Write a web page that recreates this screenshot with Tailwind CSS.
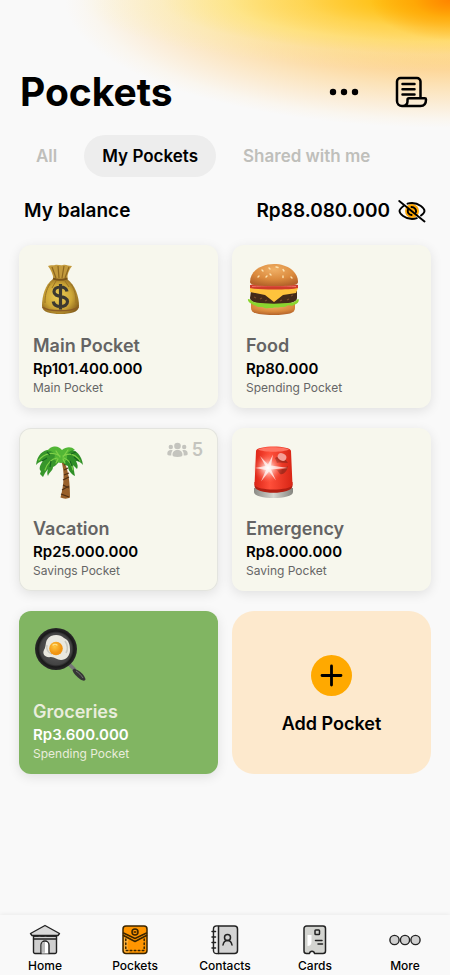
<!DOCTYPE html>
<html lang="en">
<head>
  <meta charset="UTF-8" />
  <meta name="viewport" content="width=device-width, initial-scale=1.0"/>
  <title>Pockets</title>
  <script src="https://cdn.jsdelivr.net/npm/@tailwindcss/browser@4"></script>
</head>
<body class="bg-[#f9f9f9] text-black font-['Inter',sans-serif]">
<div class="min-h-screen flex flex-col bg-no-repeat bg-[radial-gradient(ellipse_80px_40px_at_100%_0,#ff8500_0%,#ff9d0099_45%,#ffb40000_100%),radial-gradient(ellipse_370px_70px_at_100%_0,#ffae00_0%,#ffc312e6_20%,#ffdb45b3_40%,#fff27880_60%,#fcf8b04d_78%,#fbf8d000_100%),radial-gradient(ellipse_385px_128px_at_100%_0,#ffae48_0%,#ffc267_30%,#fdd38f_50%,#fce3b9_68%,#fbeeda_83%,#faf6ef_93%,#f9f9f9_100%)]">

  <header class="flex items-center pt-[68px] pl-5 pr-[22px]">
    <h1 class="flex-1 text-[39px] leading-12 font-bold">Pockets</h1>
    <button aria-label="Options" class="mr-9">
      <svg class="w-[30px] h-2" viewBox="0 0 30 8"><circle cx="4" cy="4" r="3.2"/><circle cx="15" cy="4" r="3.2"/><circle cx="26" cy="4" r="3.2"/></svg>
    </button>
    <button aria-label="History">
      <svg class="w-[33px] h-8" viewBox="0 0 33 32" fill="none" stroke="#000" stroke-width="2.500" stroke-linecap="round" stroke-linejoin="round">
        <path d="M25.500 22V5.500a3.500 3.500 0 0 0-3.500-3.500H5.500A3.500 3.500 0 0 0 2 5.500V25a5 5 0 0 0 5 5H25.500c3 0 5.500-2 5.500-6.500 0-.8-.4-1.200-1.200-1.200H14c-1 0-1.500.5-1.500 1.500v1.700A4.500 4.500 0 0 1 8 30"/>
        <path d="M7.500 8H19.500M7.500 13.200H19.500M7.500 18.400H19.500"/>
      </svg>
    </button>
  </header>

  <nav class="flex gap-[9px] mt-[19px] pl-[18px] text-[17px] leading-[42px] font-semibold text-[#bfbfbb]">
    <button class="px-[18px]">All</button>
    <button class="px-[18px] rounded-full bg-[#ededed] text-black">My Pockets</button>
    <button class="px-[18px]">Shared with me</button>
  </nav>

  <section class="flex items-center mt-5 pl-6 pr-6 text-[19px] leading-7 font-semibold">
    <h2 class="flex-1">My balance</h2>
    <p>Rp88.080.000</p>
    <button aria-label="Hide balance" class="ml-2">
      <svg class="w-7 h-6" viewBox="0 0 28 24" fill="none" stroke="#000" stroke-width="1.900" stroke-linecap="round">
        <circle cx="14" cy="12" r="7" fill="#ffa600" stroke="none"/>
        <path d="M5.500 7C3 9 1.500 11 1.500 12c0 2.500 5.500 8 12.500 8 1.800 0 3.400-.3 4.800-.8M9.500 4.700C10.900 4.200 12.400 4 14 4c7 0 12.500 5.500 12.500 8 0 1.200-1.300 3-3.500 4.600"/>
        <path d="M10 10.500c-.8 2.700.7 5.200 3.600 5.500M13.500 8c2.900 0 5 2.500 4.500 5.200M1.200 2 26.500 22.500"/>
      </svg>
    </button>
  </section>

  <main class="grid grid-cols-2 gap-x-[14px] gap-y-5 mt-5 px-[19px] pb-6">

    <a href="#" class="rounded-xl bg-[#f7f7ed] shadow-[0_3px_12px_rgba(0,0,0,0.1)] px-[14px] pt-4 pb-3">
      <svg class="size-14" viewBox="0 0 56 56">
        <defs>
          <radialGradient id="sack" cx="45%" cy="50%" r="60%"><stop offset="0" stop-color="#edcf57"/><stop offset=".6" stop-color="#cda637"/><stop offset="1" stop-color="#87601d"/></radialGradient>
        </defs>
        <path d="M20 18C12 24 9 35 9 45c0 6 8 8 18.500 8S46 51 46 45c0-10-4-21-12-27z" fill="url(#sack)"/>
        <path d="M15 5c3-1.500 5 0 7-1 3-1 5 1 8 0s5 1 9 1c-3 4-5 8-4.500 13-4 1.500-10 1.500-14 0C20 13 18 9 15 5z" fill="#c39a3c"/>
        <path d="M19 6l4 11M25 5l1 12M31 5l-2 12M36 6l-4 11" stroke="#8d671f" stroke-width="1.200" fill="none"/>
        <path d="M20 17.500c4 1.500 10 1.500 14.500 0" stroke="#7b5518" stroke-width="2" fill="none"/>
        <path d="M17 23c-4 6-5 12-5 19M38 23c4 6 5 12 5 19M23 20l-4 7M32 20l4 6" stroke="#9b7425" stroke-width="1" fill="none"/>
        <path d="M9.500 46c6 5 29 5 36 0" stroke="#8b5c26" stroke-width="1.500" fill="none"/>
        <path d="M34 30.500c-.6-3-3-4.500-6.500-4.500-4 0-6.500 2-6.500 4.800 0 6.400 13.500 3 13.500 9.700 0 3-2.700 5-7 5-4 0-6.700-1.800-7.300-5M27.500 23v25.500" stroke="#3c3930" stroke-width="3.200" fill="none"/>
      </svg>
      <h3 class="mt-[17px] text-lg leading-6 font-semibold text-[#646464]">Main Pocket</h3>
      <p class="text-[15px] leading-[21px] font-semibold">Rp101.400.000</p>
      <p class="text-xs leading-[17px] text-[#666]">Main Pocket</p>
    </a>

    <a href="#" class="rounded-xl bg-[#f7f7ed] shadow-[0_3px_12px_rgba(0,0,0,0.1)] px-[14px] pt-4 pb-3">
      <svg class="size-14" viewBox="0 0 56 56">
        <defs>
          <radialGradient id="bun" cx="50%" cy="25%" r="75%"><stop offset="0" stop-color="#f0b066"/><stop offset=".6" stop-color="#db8a3d"/><stop offset="1" stop-color="#b4632a"/></radialGradient>
        </defs>
        <path d="M5 42h44v5c0 5-6 7-22 7S5 52 5 47z" fill="url(#bun)"/>
        <path d="M5 30h46v7c0 5-9 6-23 6S4 42 4 37z" fill="#432a19"/>
        <path d="M8 36l2 1m4 1l2-1m3 3l2-1m13 1l2-1m5 0l2-1m2-3l2-1" stroke="#7a4c2b" stroke-width="1.200"/>
        <path d="M2 38c3 0 4 3 8 3.500 10 1.500 26 1.500 36 0 4-.5 4-3 6.500-3.500 1 2-.5 5-3.500 5.500-2 .5-2 2-5 1s-4 2-7 1.500-4 1-6.500.5-4 1-6.500.5-4 1-6.500-.5-4 .5-6.500-1S1 42 2 38z" fill="#8bd52f"/>
        <path d="M4 27h48l-2 5-13 2-9 7-9-7-15-3z" fill="#ffc33c"/>
        <path d="M4 24c6-2 42-2 48 0v3c-7 2-41 2-48 0z" fill="#cf3c2c"/>
        <path d="M6 25.500c10-1 34-1 44 0" stroke="#f0776a" stroke-width="1" fill="none"/>
        <path d="M28 3C14 3 4 11 4 21c0 3 5 4 24 4s24-1 24-4C52 11 42 3 28 3z" fill="url(#bun)"/>
        <path d="M16 9l1 1m6-3l1 1m6-2l2 .5m5 2l1 1.500m-14 3l1 1m12 1v1.500M13 15l-1 1m33 0l1 1m-25-2l-1 1" stroke="#fde3b0" stroke-width="1.400" stroke-linecap="round"/>
      </svg>
      <h3 class="mt-[17px] text-lg leading-6 font-semibold text-[#646464]">Food</h3>
      <p class="text-[15px] leading-[21px] font-semibold">Rp80.000</p>
      <p class="text-xs leading-[17px] text-[#666]">Spending Pocket</p>
    </a>

    <a href="#" class="relative rounded-xl bg-[#f7f7ed] shadow-[0_3px_12px_rgba(0,0,0,0.1)] ring-1 ring-inset ring-[#e3e4df] px-[14px] pt-4 pb-3">
      <span class="absolute top-[10px] right-[15px] flex items-center gap-1 text-lg leading-6 font-semibold text-[#c4c4be]">
        <svg class="w-[21px] h-4" viewBox="0 0 21 16" fill="currentColor">
          <circle cx="10.500" cy="4" r="3.300"/><circle cx="3.800" cy="5" r="2.200"/><circle cx="17.200" cy="5" r="2.200"/>
          <path d="M5.500 13c0-3.500 2-5 5-5s5 1.500 5 5c0 1-1.500 2-5 2s-5-1-5-2zM.3 12c0-3 1.300-4 3.500-4 .8 0 1.400.1 1.900.4C4.500 9.700 4.200 11 4.300 13.500 1.500 13.500.3 13 .3 12zM20.700 12c0-3-1.300-4-3.500-4-.8 0-1.400.1-1.900.4 1.200 1.300 1.500 2.600 1.400 5.100 2.800 0 4-.5 4-1.500z"/>
        </svg>
        5
      </span>
      <svg class="size-14" viewBox="0 0 56 56">
        <path d="M28 16c4 12 3 25-.5 37.500 3 1.500 7 1.500 9.500 0C37 40 36 26 30 15z" fill="#986029"/>
        <path d="M31 21l2.500-1M31 26l4-2M31 31l5-2M30 36l6-3M30 41l6 3M29 46l7-4M28 50l8 3" stroke="#4f2f13" stroke-width="1.200"/>
        <path d="M28 14C22 1 5 3 3 21c3-3 5-4 7-4-4 5-4 9-2 10l-1 3 3 3 2-4 3-4c-1 3-1 5 0 7 1-4 5-5 5-9 3-1 6-5 8-9z" fill="#37962b"/>
        <path d="M28 14C33 0 48 5 50 21c-3-3-4-4-7-4 2 4 2 6 1 8l-4-4c1 4 1 7 2 11-4-2-7-6-7-10-4-1-6-4-7-8z" fill="#2f8f27"/>
        <path d="M17 4c6-3 9-1 12 2 4-3 9-4 13 0-4 0-7 2-8 5 1 5-2 8-6 8s-8-3-6-8C20 8 18 6 14 7z" fill="#52b635"/>
        <path d="M27 12C19 7 11 10 6 16M24 14c-6 1-10 6-12 12M30 12c7-4 13-1 17 5M31 14c5 2 8 7 9 12M23 7l4 6M35 6l-5 7M25 15l-2 4M30 15l2 4" stroke="#7fd048" stroke-width="1.200" fill="none" stroke-linecap="round"/>
        <path d="M17 11l-3-3M14 14l-5 3M18 17l-1 6M38 10l5-2M41 13l5 4M37 17l2 5" stroke="#18641f" stroke-width="1.200"/>
      </svg>
      <h3 class="mt-[17px] text-lg leading-6 font-semibold text-[#646464]">Vacation</h3>
      <p class="text-[15px] leading-[21px] font-semibold">Rp25.000.000</p>
      <p class="text-xs leading-[17px] text-[#666]">Savings Pocket</p>
    </a>

    <a href="#" class="rounded-xl bg-[#f7f7ed] shadow-[0_3px_12px_rgba(0,0,0,0.1)] px-[14px] pt-4 pb-3">
      <svg class="size-14" viewBox="0 0 56 56">
        <defs>
          <linearGradient id="base"><stop offset="0" stop-color="#8b8b86"/><stop offset=".5" stop-color="#d6d6d0"/><stop offset="1" stop-color="#85857f"/></linearGradient>
          <linearGradient id="lamp"><stop offset="0" stop-color="#dc2416"/><stop offset=".4" stop-color="#ff4f3a"/><stop offset="1" stop-color="#d82515"/></linearGradient>
          <radialGradient id="glow"><stop offset="0" stop-color="#fff"/><stop offset=".3" stop-color="#ffd5cc" stop-opacity=".8"/><stop offset="1" stop-color="#ff5a45" stop-opacity="0"/></radialGradient>
        </defs>
        <path d="M8 44v4c0 8 39 8 39 0v-4z" fill="url(#base)"/>
        <path d="M8.500 42c0 9 38 9 38 0V38h-38z" fill="#b01f13"/>
        <path d="M10 7c0-6 35-6 35 0l1.500 34c-3 6-35 6-38 0z" fill="url(#lamp)"/>
        <path d="M12 5.500c5-3 26-3 31 0-5 3-26 3-31 0z" fill="#ff7463"/>
        <path d="M29 14c5-3 10 0 13 5-4 0-8-1-11 0zM31 26c5 0 8-2 11-4-1 6-5 9-8 8z" fill="#a82a1c"/>
        <ellipse cx="36" cy="13" rx="4.500" ry="3.500" fill="#f59e96" transform="rotate(25 36 13)"/>
        <circle cx="22" cy="24" r="15" fill="url(#glow)"/>
        <path d="M22 20.500l5-10-2 11 17 2.500-17 1.500 5 11-7-9-8 10 5-11.500L9 24l10.500-2L14 12z" fill="#fff" opacity=".7"/>
      </svg>
      <h3 class="mt-[17px] text-lg leading-6 font-semibold text-[#646464]">Emergency</h3>
      <p class="text-[15px] leading-[21px] font-semibold">Rp8.000.000</p>
      <p class="text-xs leading-[17px] text-[#666]">Saving Pocket</p>
    </a>

    <a href="#" class="rounded-xl bg-[#81b562] shadow-[0_3px_12px_rgba(0,0,0,0.1)] px-[14px] pt-4 pb-3">
      <svg class="size-14" viewBox="0 0 56 56">
        <defs>
          <radialGradient id="pan"><stop offset="0" stop-color="#666"/><stop offset=".75" stop-color="#434343"/><stop offset=".85" stop-color="#191919"/><stop offset="1" stop-color="#292929"/></radialGradient>
          <radialGradient id="yolk" cx="40%" cy="35%"><stop offset="0" stop-color="#ffc63f"/><stop offset="1" stop-color="#f09412"/></radialGradient>
        </defs>
        <path d="M36 37l6 6" stroke="#777" stroke-width="3.500"/>
        <path d="M41 41.500c6 2 11 7 11.500 11-1 2-3 1-5 0-4-3-7-6-8-9z" fill="#353535"/>
        <path d="M43 44c3 2 5 4 7 7" stroke="#727272" stroke-width="1" fill="none"/>
        <circle cx="23" cy="22" r="21" fill="url(#pan)"/>
        <path d="M18 9c5-2 10-1 13 2 5 2 6 7 6 12 0 6-4 10-9 10-4 0-6-3-10-3-6 1-9-3-7-7 3-5 0-10 7-14z" fill="#e9e8df"/>
        <path d="M14 18c-1 4 1 8 5 9M32 14c3 4 3 9 1 12" stroke="#c9c8be" stroke-width="1.500" fill="none"/>
        <circle cx="23" cy="21.500" r="6.800" fill="url(#yolk)"/>
        <path d="M20 18c1-1 3-1 4 0" stroke="#ffe38e" stroke-width="1.200" stroke-linecap="round" fill="none"/>
      </svg>
      <h3 class="mt-[17px] text-lg leading-6 font-semibold text-[#e9eddc]">Groceries</h3>
      <p class="text-[15px] leading-[21px] font-semibold text-white">Rp3.600.000</p>
      <p class="text-xs leading-[17px] text-[#e9eddc]">Spending Pocket</p>
    </a>

    <button class="flex flex-col items-center justify-center gap-4 pt-[6px] rounded-[22px] bg-[#fde9cd]">
      <svg class="size-[41px]" viewBox="0 0 41 41"><circle cx="20.500" cy="20.500" r="20.500" fill="#ffa900"/><path d="M20.500 11v19M11 20.500h19" stroke="#000" stroke-width="2.800" stroke-linecap="round"/></svg>
      <span class="text-lg leading-6 font-semibold">Add Pocket</span>
    </button>
  </main>

  <footer class="mt-auto bg-[#f9f9f9] shadow-[0_-1px_4px_rgba(0,0,0,0.06)]">
    <nav class="grid grid-cols-5 pt-[9px] text-xs leading-[18px] font-medium">
      <a href="#" class="flex flex-col items-center gap-px">
        <svg class="size-8" viewBox="0 0 32 32" fill="none" stroke="#222" stroke-width="1.400" stroke-linecap="round" stroke-linejoin="round">
          <path d="M4.500 12v16a1.500 1.500 0 0 0 1.500 1.500h20a1.500 1.500 0 0 0 1.500-1.500V12z" fill="#cfcfcf"/>
          <path d="M1.500 9.500 16 1.500l14.500 8-1.500 2H3z" fill="#d9d9d9"/>
          <path d="M4.500 15h23M4.500 12H9m3 0h3m3 0h9.500"/>
          <path d="M12 29.500V21a4 4 0 0 1 8 0v8.500" fill="#fff"/>
          <path d="M12.700 28.800V21a3 3 0 0 1 3.300-3v10.800z" fill="#bbb" stroke="none"/>
        </svg>
        Home
      </a>
      <a href="#" class="flex flex-col items-center gap-px">
        <svg class="size-8" viewBox="0 0 32 32" fill="none" stroke="#3a2500" stroke-width="1.500" stroke-linecap="round" stroke-linejoin="round">
          <rect x="4" y="2" width="24" height="27.500" rx="3" fill="#ff9500"/>
          <path d="M5 13v13c0 1.500 1 2.500 2 2.500h3c-2-5-2-10 0-13z" fill="#ffb13b" stroke="none"/>
          <path d="M4.500 9 16 14.500 27.500 9M4.500 11.500 16 17.500l11.500-6"/>
          <circle cx="16" cy="8" r="3"/><path d="M15.200 8h1.600"/>
          <path d="M6.800 15v11.500h18.400V15" stroke-dasharray="1.500 2.500"/>
        </svg>
        Pockets
      </a>
      <a href="#" class="flex flex-col items-center gap-px">
        <svg class="size-8" viewBox="0 0 32 32" fill="none" stroke="#222" stroke-width="1.500" stroke-linecap="round" stroke-linejoin="round">
          <rect x="4.500" y="2" width="24" height="27.500" rx="3" fill="#d3d3d3"/>
          <path d="M5.500 4.500v23c0 .8.500 1.200 1.200 1.200H9V2.800H7c-1 0-1.500.7-1.500 1.700z" fill="#eee" stroke="none"/>
          <path d="M9.500 2.500v27M3 7.500h3.500M3 13h3.500M3 18.500h3.500M3 24h3.500"/>
          <circle cx="18.500" cy="13.500" r="3"/><path d="M14 21c.5-3 2-4.500 4.500-4.500s4 1.500 4.500 4.500"/>
        </svg>
        Contacts
      </a>
      <a href="#" class="flex flex-col items-center gap-px">
        <svg class="size-8" viewBox="0 0 32 32" fill="none" stroke="#222" stroke-width="1.500" stroke-linecap="round" stroke-linejoin="round">
          <path d="M7.500 2h16.500a2.500 2.500 0 0 1 2.500 2.500v22.500a2.500 2.500 0 0 1-2.500 2.500h-8.500c-.5-3-4.500-3-5 0h-3A2.500 2.500 0 0 1 5 27V4.500a2.500 2.500 0 0 1 2.500-2.500z" fill="#d3d4d0"/>
          <path d="M8.500 11h4v7c0 2.500-1.500 4-4 4z" fill="#fff" stroke="none"/>
          <rect x="16" y="6" width="4.500" height="4.500" rx=".8"/>
          <path d="M16.500 16.500h6.500M19 20h4.500"/>
        </svg>
        Cards
      </a>
      <a href="#" class="flex flex-col items-center gap-px">
        <svg class="size-8" viewBox="0 0 32 32" fill="#d0d0d0" stroke="#222" stroke-width="1.400">
          <circle cx="5.500" cy="16" r="4.600"/><circle cx="16" cy="16" r="4.600"/><circle cx="26.500" cy="16" r="4.600"/>
        </svg>
        More
      </a>
    </nav>
  </footer>
</div>
</body>
</html>
